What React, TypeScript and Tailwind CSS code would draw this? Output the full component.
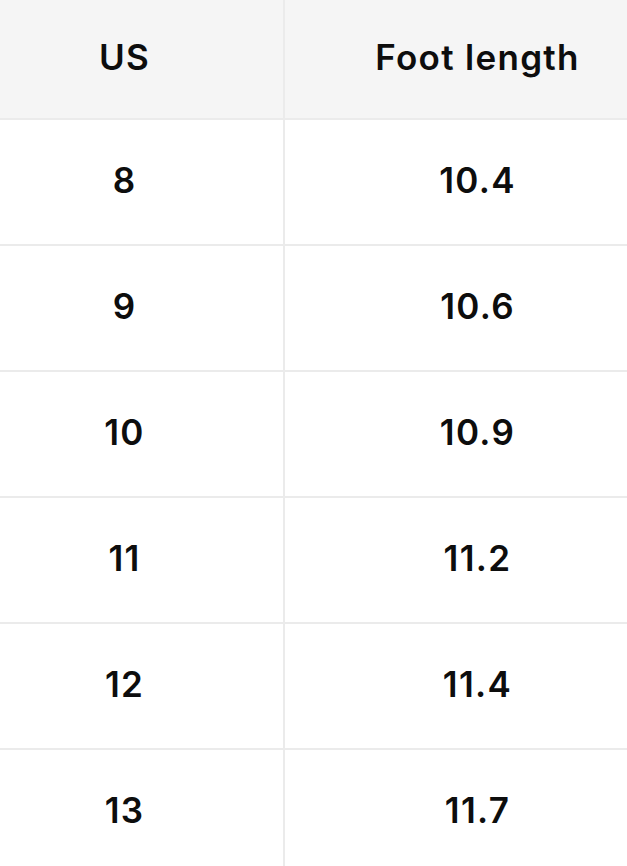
const rows = [
  { us: '8', length: '10.4' },
  { us: '9', length: '10.6' },
  { us: '10', length: '10.9' },
  { us: '11', length: '11.2' },
  { us: '12', length: '11.4' },
  { us: '13', length: '11.7' },
];

const App = () => {
  return (
    <div className="w-[627px] h-[866px] overflow-hidden bg-white font-['Inter',sans-serif] text-[#0d0d0d]">
      <table className="ml-[-34px] border-collapse table-fixed w-[704px]">
        <colgroup>
          <col className="w-[318px]" />
          <col className="w-[386px]" />
        </colgroup>
        <thead>
          <tr className="bg-[#f5f5f5] h-[119px]">
            <th className="pb-[4px] text-[35px] tracking-[1.3px] font-semibold text-center border-r-2 border-b-2 border-[#ebebeb]">
              US
            </th>
            <th className="pb-[4px] text-[35px] tracking-[1.3px] font-semibold text-center border-b-2 border-[#ebebeb]">
              Foot length
            </th>
          </tr>
        </thead>
        <tbody>
          {rows.map((row) => (
            <tr key={row.us} className="h-[126px]">
              <td className="pb-[4px] text-[35px] tracking-[1.3px] font-semibold text-center border-r-2 border-b-2 border-[#ebebeb]">
                {row.us}
              </td>
              <td className="pb-[4px] text-[35px] tracking-[1.3px] font-semibold text-center border-b-2 border-[#ebebeb]">
                {row.length}
              </td>
            </tr>
          ))}
        </tbody>
      </table>
    </div>
  );
};

export default App;
